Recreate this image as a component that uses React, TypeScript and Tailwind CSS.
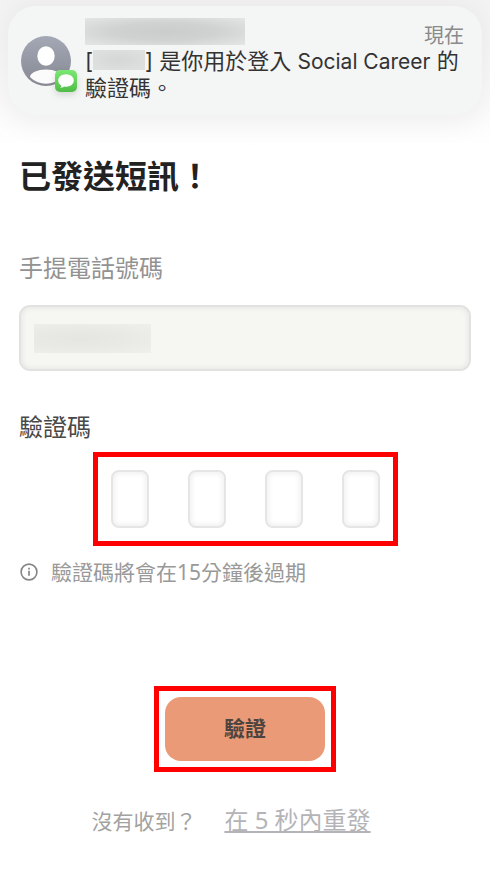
import { useState } from "react";

const CODE_LENGTH = 4;

function Avatar() {
  return (
    <div className="relative h-[52px] w-14 shrink-0">
      <svg viewBox="0 0 50 50" className="size-[50px]" aria-hidden="true">
        <defs>
          <linearGradient id="avatar" x1="0" y1="0" x2="0" y2="1">
            <stop offset="0" stopColor="#a4a8b5" />
            <stop offset="1" stopColor="#868993" />
          </linearGradient>
          <clipPath id="avatar-clip">
            <circle cx="25" cy="25" r="22.8" />
          </clipPath>
        </defs>
        <circle cx="25" cy="25" r="25" fill="url(#avatar)" />
        <ellipse cx="25" cy="20" rx="8.7" ry="9.8" fill="#fff" />
        <ellipse cx="25" cy="41" rx="16" ry="7.5" fill="#fbfbfb" clipPath="url(#avatar-clip)" />
      </svg>
      <svg viewBox="0 0 22 22" className="absolute -bottom-1 right-0 size-[22px] drop-shadow-md" aria-hidden="true">
        <defs>
          <linearGradient id="bubble" x1="0" y1="0" x2="0" y2="1">
            <stop offset="0" stopColor="#7ce874" />
            <stop offset="1" stopColor="#4fbd45" />
          </linearGradient>
        </defs>
        <rect width="22" height="22" rx="5" fill="url(#bubble)" />
        <path
          d="M11 4.2c-4.400 0-7.800 2.800-7.800 6.300 0 2.200 1.300 4 3.300 5.200-.1.800-.6 1.500-1.300 2 1.500.1 2.800-.4 3.800-1.200.6.200 1.300.2 2 .2 4.400 0 7.800-2.700 7.800-6.200S15.400 4.200 11 4.200z"
          fill="#fff"
        />
      </svg>
    </div>
  );
}

function InfoIcon() {
  return (
    <svg viewBox="0 0 18 18" className="size-[18px] shrink-0" fill="none" stroke="#858585" aria-hidden="true">
      <circle cx="9" cy="9" r="7.900" strokeWidth="1.600" />
      <path d="M9 7.800v5" strokeWidth="1.700" />
      <path d="M9 4.800v1.800" strokeWidth="1.700" />
    </svg>
  );
}

function Notification() {
  return (
    <section className="mx-2 mt-[6px] flex items-start rounded-[28px] bg-[#f4f5f5] pt-3 pr-[18px] pb-[14px] pl-[13px] shadow-[0_4px_26px_6px_rgba(0,0,0,0.05)]">
      <div className="pt-[18px]">
        <Avatar />
      </div>
      <div className="ml-2 min-w-0 flex-1">
        <div className="flex h-[30px] items-start justify-between">
          <div className="h-[27px] w-40 bg-[radial-gradient(ellipse_at_center,#cbcccc_0%,#d0d1d1_45%,#e4e6e6_100%)]" />
          <time className="pt-[6px] text-[20px] leading-6 text-[#8a8a8a]">現在</time>
        </div>
        <p className="font-['Inter','Noto_Sans_CJK_TC',sans-serif] text-[22px] leading-[26px] text-[#333]">
          [<span className="mt-0.5 inline-block h-5 w-[52px] bg-[radial-gradient(ellipse_at_center,#d5d6d6_0%,#e0e1e1_100%)] align-top" />] 是你用於登入{" "}
          <span className="text-[21px]">Social Career</span> 的
          <br />
          驗證碼。
        </p>
      </div>
    </section>
  );
}

export default function App() {
  const [code, setCode] = useState<string[]>(Array(CODE_LENGTH).fill(""));

  const setDigit = (i: number, value: string) => {
    setCode(code.map((d, n) => (n === i ? value.replace(/\D/g, "").slice(-1) : d)));
  };

  return (
    <div className="flow-root min-h-screen bg-white bg-[linear-gradient(#f3f3f3,#fbfbfb_100px,#fff_150px)] bg-no-repeat font-['Noto_Sans','Noto_Sans_CJK_TC',sans-serif]">
      <Notification />

      <main className="px-[19px]">
        <h1 className="mt-[39px] text-[32px] leading-[44px] font-bold text-[#222]">已發送短訊！</h1>

        <form onSubmit={(e) => e.preventDefault()}>
          <label htmlFor="phone" className="mt-[54px] block text-[24px] leading-8 text-[#929292]">
            手提電話號碼
          </label>
          <div className="relative mt-[21px]">
            <input
              id="phone"
              type="tel"
              readOnly
              className="block h-[66px] w-full rounded-[11px] border-2 border-[#e2e3e1] bg-[#f6f7f2] px-3 text-[24px] shadow-[inset_0_0_4px_2px_rgba(0,0,0,0.05)] outline-none"
            />
            <div className="pointer-events-none absolute top-[19px] left-[15px] h-[29px] w-[117px] bg-[radial-gradient(ellipse_at_40%_50%,#e5e6e2_0%,#e9eae6_50%,#eff0eb_100%)]" />
          </div>

          <fieldset>
            <legend className="pt-10 text-[24px] leading-8 text-[#484848]">驗證碼</legend>
            <div className="mx-auto mt-[9px] flex w-fit gap-[39px] border-[5px] border-[#f00] p-[13px]">
              {code.map((digit, i) => (
                <input
                  key={i}
                  aria-label={`${i + 1}`}
                  inputMode="numeric"
                  value={digit}
                  onChange={(e) => setDigit(i, e.target.value)}
                  className="h-[58px] w-[38px] rounded-lg border-2 border-[#e5e5e5] bg-white text-center text-[24px] shadow-[inset_0_0_5px_2px_rgba(0,0,0,0.06)] outline-none"
                />
              ))}
            </div>
          </fieldset>

          <p className="mt-3 flex items-center gap-[13px] pl-px text-[21px] leading-7 text-[#999]">
            <InfoIcon />
            驗證碼將會在15分鐘後過期
          </p>

          <div className="mx-auto mt-[100px] w-fit border-[5px] border-[#f00] p-[6px]">
            <button type="submit" className="block h-16 w-40 rounded-[16px] bg-[#ea9a77] text-[21px] font-bold text-[#4d443f]">
              驗證
            </button>
          </div>
        </form>

        <div className="mt-8 flex items-baseline justify-center gap-7 pr-7 pb-8">
          <span className="text-[21px] leading-8 text-[#a2a2a2]">沒有收到？</span>
          <a href="#resend" className="text-[24px] leading-8 text-[#b4b4b8] underline">
            在 5 秒內重發
          </a>
        </div>
      </main>
    </div>
  );
}
